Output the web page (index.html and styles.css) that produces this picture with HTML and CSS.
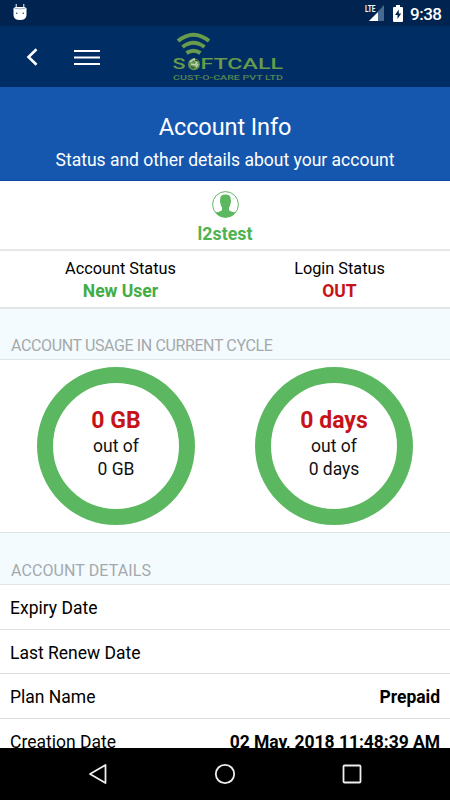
FILE: index.html
```html
<!DOCTYPE html>
<html lang="en">
<head>
<meta charset="utf-8">
<title>Account Info</title>
<link rel="stylesheet" href="styles.css">
</head>
<body>
<div class="screen">
  <div class="statusbar">
    <svg class="droid" width="14" height="18" viewBox="0 0 14 18"><path d="M3.2 1v4M10.800 1v4" stroke="#fff" stroke-width="1"/><path d="M.5 5.500Q1 4 3 4h8q2 0 2.500 1.500V12q0 5-6.500 5T.5 12z" fill="#fff"/><path d="M1.500 5.200q5.500 1.500 11 0" stroke="#9daec1" fill="none"/><circle cx="3.700" cy="10.200" r=".8" fill="#345"/><circle cx="10.200" cy="10.200" r=".8" fill="#345"/></svg>
    <div class="status-right">
      <svg width="20" height="18" viewBox="0 0 20 18"><path d="M19 2v16H4z" fill="#486a8f"/><path d="M13 9.200V18H4z" fill="#fff"/><text class="lte" x="0" y="9" textLength="10.500" lengthAdjust="spacingAndGlyphs">LTE</text></svg>
      <svg class="battery" width="10" height="17" viewBox="0 0 10 17"><path d="M3 0h4v2h2q1 0 1 1v13q0 1-1 1H1q-1 0-1-1V3q0-1 1-1h2z" fill="#fff"/><path d="M5.800 4.500L2 10h2.500v4L8.200 8.500H5.800z" fill="#00244f"/></svg>
      <span class="clock">9:38</span>
    </div>
  </div>
  <header class="appbar">
    <svg class="back" width="12" height="18" viewBox="0 0 12 18"><path d="M10.500 1.200L2.500 9l8 7.800" fill="none" stroke="#fff" stroke-width="2.600"/></svg>
    <svg class="menu" width="26" height="16" viewBox="0 0 26 16"><path d="M0 1h26M0 7.500h26M0 14h26" stroke="#fff" stroke-width="2"/></svg>
    <svg class="logo" width="112" height="50" viewBox="0 0 112 50">
      <g fill="none" stroke="#689b4b" stroke-width="4"><path d="M5 9Q20.500-3.500 36 9"/><path d="M9.500 15Q20.500 6.500 31.500 15"/><path d="M13.500 21Q20.500 16.500 27.500 21"/></g>
      <g class="brand"><text x="-.5" y="37" textLength="13" lengthAdjust="spacingAndGlyphs">S</text><text x="27.500" y="37" textLength="82.500" lengthAdjust="spacingAndGlyphs">FTCALL</text></g>
      <circle cx="21" cy="32.300" r="6" fill="#629252"/><path d="M17 30l4-3 3 3-2 3-4-1M23 35l2-3" fill="none" stroke="#c4d7b4" stroke-width="1.500"/><path d="M18 35l3 1M22 28l3 1" stroke="#285d38" stroke-width="1.500"/>
      <text class="tagline" x="0" y="48" textLength="110" lengthAdjust="spacingAndGlyphs">CUST-O-CARE PVT LTD</text>
    </svg>
  </header>
  <section class="banner">
    <h1>Account Info</h1>
    <p>Status and other details about your account</p>
  </section>
  <main>
    <section class="profile">
      <svg width="27" height="27" viewBox="0 0 27 27"><circle cx="13.500" cy="13.500" r="12.900" fill="#fff" stroke="#5cb860" stroke-width="1"/><path d="M8.200 8.500Q8 3.500 13.500 3.500T18.800 8.500Q19.500 9.500 18.700 12Q18 15.500 17 16.500v2.500Q18 20.500 23.500 21.600Q19.500 26.500 13.500 26.500T3.500 21.600Q9 20.500 10 19v-2.500Q9 15.500 8.300 12Q7.500 9.500 8.200 8.500z" fill="#5cb860"/></svg>
      <strong>l2stest</strong>
    </section>
    <section class="states">
      <div class="account"><span>Account Status</span><strong class="green">New User</strong></div>
      <div class="login"><span>Login Status</span><strong class="red">OUT</strong></div>
    </section>
    <h2>ACCOUNT USAGE IN CURRENT CYCLE</h2>
    <section class="usage">
      <div class="ring"><strong>0 GB</strong><span>out of</span><span>0 GB</span></div>
      <div class="ring"><strong>0 days</strong><span>out of</span><span>0 days</span></div>
    </section>
    <h2 class="details-title">ACCOUNT DETAILS</h2>
    <dl class="details">
      <div><dt>Expiry Date</dt></div>
      <div><dt>Last Renew Date</dt></div>
      <div><dt>Plan Name</dt><dd>Prepaid</dd></div>
      <div><dt>Creation Date</dt><dd>02 May, 2018 11:48:39 AM</dd></div>
    </dl>
  </main>
  <nav class="navbar">
    <svg width="20" height="22" viewBox="0 0 20 22"><path d="M17.500 2v18L2 11z" fill="none" stroke="#eee" stroke-width="1.800" stroke-linejoin="round"/></svg>
    <svg width="22" height="22" viewBox="0 0 22 22"><circle cx="11" cy="11" r="9.200" fill="none" stroke="#eee" stroke-width="1.800"/></svg>
    <svg width="20" height="20" viewBox="0 0 20 20"><rect x="1.500" y="1.500" width="17" height="17" rx="1" fill="none" stroke="#eee" stroke-width="1.800"/></svg>
  </nav>
</div>
</body>
</html>
```
FILE: styles.css
```css
* { box-sizing: border-box; }
body { margin: 0; font-family: Roboto, sans-serif; font-size: 17.500px; color: #111; }
h1, h2, p, dl, dd { margin: 0; }
svg { display: block; flex: none; }
strong, dd { font-weight: 700; }
.screen { width: 450px; height: 800px; display: flex; flex-direction: column; overflow: hidden; background: #fff; }
.statusbar { height: 26px; flex: none; display: flex; justify-content: space-between; background: #00244f; padding: 3px 9px 0 13px; }
.status-right { display: flex; }
.lte { font: 700 9px Roboto, sans-serif; fill: #fff; }
.battery { margin: 2px 7px 0 8px; }
.clock { font-size: 17px; line-height: 22px; font-weight: 500; color: #fff; width: 31px; white-space: nowrap; letter-spacing: -.5px; }
.appbar { height: 61px; flex: none; display: flex; align-items: flex-start; background: #002d64; padding: 0 26px; }
.back { margin-top: 22px; }
.menu { margin: 24px 0 0 36px; }
.logo { margin: 6px 0 0 73px; }
.brand { font: 500 14px Roboto, sans-serif; fill: #689b4b; }
.tagline { font: 500 6.500px Roboto, sans-serif; fill: #56854f; }
.banner { height: 94px; flex: none; background: #1557ae; color: #fff; text-align: center; padding-top: 25px; border-bottom: 1px solid #0b45a5; }
.banner h1 { font-size: 23.500px; line-height: 30px; font-weight: 400; letter-spacing: -.1px; }
.banner p { font-size: 17.500px; line-height: 24px; margin-top: 6px; }
main { flex: 1; min-height: 0; overflow: hidden; }
.profile { height: 70px; display: flex; flex-direction: column; align-items: center; padding-top: 10px; border-bottom: 2px solid #e7e7e7; color: #4db34f; }
.profile strong { line-height: 22px; margin-top: 5px; font-size: 17.800px; }
.states { height: 58px; display: flex; border-bottom: 2px solid #e3e6e7; padding: 6px 0 0; }
.states div { display: flex; flex-direction: column; align-items: center; line-height: 23px; }
.states span { font-size: 16.300px; color: #000; }
.account { width: 241px; }
.login { width: 197px; }
.green { color: #42ad44; }
.red { color: #c61218; }
h2 { height: 51px; background: #f3fbff; border-bottom: 1px solid #dfe4e6; padding: 25px 11px 0; font-size: 16px; line-height: 23px; font-weight: 400; letter-spacing: -.380px; color: #a5a9ab; }
.usage { height: 173px; display: flex; gap: 60px; padding: 7px 0 0 37px; border-bottom: 1px solid #dfe2e4; }
.ring { width: 158px; height: 158px; border: 16px solid #5cb860; border-radius: 50%; display: flex; flex-direction: column; align-items: center; padding-top: 24px; line-height: 23px; }
.ring strong { color: #c61218; font-size: 23px; line-height: 28px; }
.ring span { font-size: 17.500px; }
.details-title { height: 52px; padding-top: 26px; letter-spacing: .1px; }
.details div { height: 44.500px; display: flex; justify-content: space-between; align-items: center; padding: 3px 10px 0; border-bottom: 1px solid #dfdfdf; color: #000; }
.details dd { letter-spacing: -.040px; }
.navbar { height: 52px; flex: none; background: #000; display: flex; align-items: center; justify-content: space-between; padding: 0 88px; }
```
